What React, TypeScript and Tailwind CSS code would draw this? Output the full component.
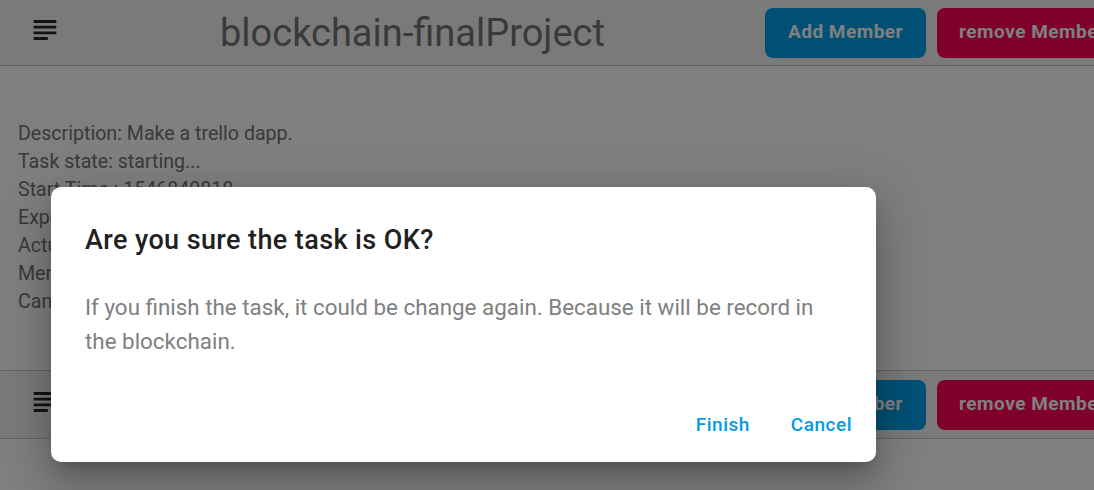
import React from "react";

const SubjectIcon = () => (
  <svg viewBox="0 0 24 24" className="w-[34px] h-[34px] shrink-0" fill="#262626">
    <path d="M14 17H4v2h10v-2zm6-8H4v2h16V9zM4 15h16v-2H4v2zM4 5v2h16V5H4z" />
  </svg>
);

const CardHeader = ({ title, className }: { title: string; className: string }) => (
  <div className={`flex items-center bg-[#f5f5f5] border-[#c4c4c4] overflow-hidden whitespace-nowrap ${className}`}>
    <div className="ml-[28px] -mt-[5px]">
      <SubjectIcon />
    </div>
    <h1 className="ml-[158px] text-[38px] leading-none text-[#747474] shrink-0">{title}</h1>
    <div className="ml-[160px] flex gap-[11px] shrink-0">
      <button className="h-[50px] px-[23px] rounded-[8px] bg-[#01a0ea] text-white text-[19px] font-bold tracking-[0.5px]">
        Add Member
      </button>
      <button className="h-[50px] px-[22px] rounded-[8px] bg-[#ff0057] text-white text-[19px] font-bold tracking-[0.5px]">
        remove Member
      </button>
    </div>
  </div>
);

const details = [
  "Description: Make a trello dapp.",
  "Task state: starting...",
  "Start Time : 1546840818",
  "Expected Time : 1547445618",
  "Actual Time : 0",
  "Members : 0x3f2a...9c1d",
  "Candidates : none",
];

export default function App() {
  return (
    <div className="relative w-[1094px] h-[490px] overflow-hidden bg-white font-['Roboto',sans-serif]">
      {/* first task card */}
      <CardHeader title="blockchain-finalProject" className="h-[66px] border-b" />
      <div className="px-[18px] py-[54px] text-[19.6px] leading-[28px] text-[#747474]">
        {details.map((d) => (
          <p key={d}>{d}</p>
        ))}
      </div>

      {/* second task card */}
      <CardHeader title="blockchain-finalProject" className="h-[69px] border-y" />

      {/* dialog */}
      <div className="absolute inset-0 bg-black/50">
        <div className="absolute left-[51px] top-[187px] w-[825px] h-[275px] bg-white rounded-[10px] shadow-[0_11px_15px_-7px_rgba(0,0,0,0.2),0_24px_38px_3px_rgba(0,0,0,0.14),0_9px_46px_8px_rgba(0,0,0,0.12)] flex flex-col">
          <h2 className="pt-[37px] px-[34px] text-[27px] leading-[32px] font-medium tracking-[0.4px] text-[#212121]">
            Are you sure the task is OK?
          </h2>
          <p className="mt-[34px] pl-[34px] pr-[40px] text-[22.4px] leading-[34px] text-[#808080]">
            If you finish the task, it could be change again. Because it will be record in the blockchain.
          </p>
          <div className="mt-auto mb-[15px] h-[44px] flex items-center justify-end gap-[17px] pr-[12px]">
            <button className="h-[44px] px-[12px] text-[19px] font-medium tracking-[0.5px] text-[#039be5]">
              Finish
            </button>
            <button className="h-[44px] px-[12px] text-[19px] font-medium tracking-[0.5px] text-[#039be5]">
              Cancel
            </button>
          </div>
        </div>
      </div>
    </div>
  );
}
